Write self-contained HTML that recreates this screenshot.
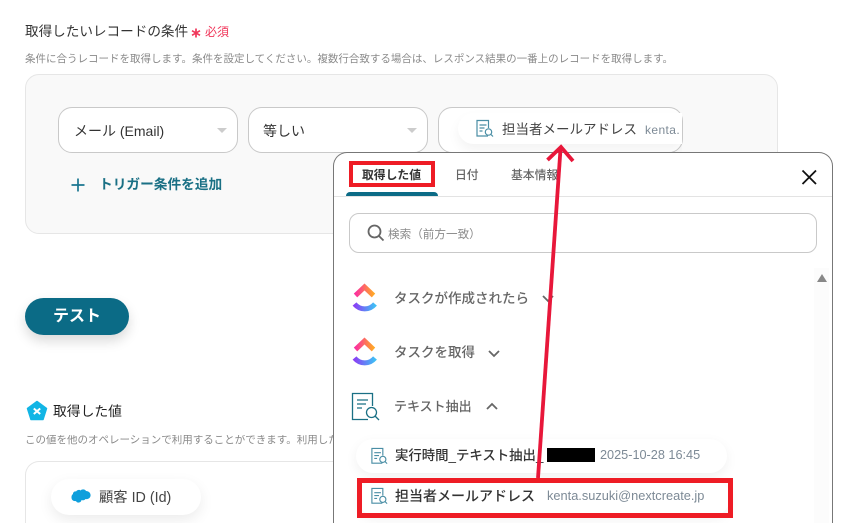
<!DOCTYPE html>
<html lang="ja"><head><meta charset="utf-8"><style>
html,body{margin:0;padding:0;background:#fff;overflow:hidden}
#r{position:relative;width:856px;height:523px;overflow:hidden;background:#fff;font-family:"Liberation Sans","Noto Sans CJK JP",sans-serif;color:#333}
#r div,#r svg{position:absolute}
.t{white-space:nowrap;line-height:1}
.box{box-sizing:border-box;background:#fff;border:1px solid #c9c9c9;border-radius:14px}
.arr{width:0;height:0;border-left:5px solid transparent;border-right:5px solid transparent;border-top:5px solid #ccc}
.pill{background:#fff;border-radius:20px}
</style></head><body><div id="r">
<div class="t" style="left:25px;top:25px;font-size:13.6px;color:#333">取得したいレコードの条件</div>
<svg style="left:191px;top:28px" width="10" height="10" viewBox="0 0 10 10" stroke="#f0365a" stroke-width="1.700"><path d="M5 .5V9.500M1 2.700L9 7.300M9 2.700L1 7.300"/></svg>
<div class="t" style="left:205px;top:26px;font-size:12px;color:#f0365a">必須</div>
<div class="t" style="left:25px;top:54px;font-size:10.500px;line-height:11px;color:#8a8a8a">条件に合うレコードを取得します。条件を設定してください。複数行合致する場合は、レスポンス結果の一番上のレコードを取得します。</div>
<div style="left:25px;top:74px;width:753px;height:160px;box-sizing:border-box;background:#f9f9f9;border:1px solid #e6e6e6;border-radius:14px"></div>
<div class="box" style="left:58px;top:107px;width:180px;height:46px"></div>
<div class="t" style="left:74px;top:124px;font-size:14px">メール (Email)</div>
<div class="arr" style="left:217px;top:128px"></div>
<div class="box" style="left:248px;top:107px;width:180px;height:46px"></div>
<div class="t" style="left:263px;top:124px;font-size:14px">等しい</div>
<div class="arr" style="left:407px;top:128px"></div>
<div class="box" style="left:438px;top:107px;width:245px;height:46px"></div>
<div style="left:458px;top:113px;width:224px;height:31px;background:#fff;border-radius:16px 0 0 16px;box-shadow:0 6px 12px rgba(0,0,0,.05);clip-path:inset(-20px 0 -9px -20px)"></div>
<svg style="left:475px;top:119px" width="20" height="20" viewBox="0 0 20 20" fill="none" stroke="#4a8ea5" stroke-width="1.200"><path d="M13 17H2V1.500h11.500V9M4.500 6h7M4.500 9h5M4.500 12h3"/><circle cx="13.500" cy="13" r="3.200"/><path d="M16 15.500l2 2"/></svg>
<div class="t" style="left:502px;top:123px;font-size:13.500px;color:#444">担当者メールアドレス</div>
<div class="t" style="left:645px;top:124px;font-size:12px;color:#7d8a96;letter-spacing:.4px">kenta.</div>
<svg style="left:71px;top:178px" width="14" height="14" viewBox="0 0 14 14" stroke="#1a7690" stroke-width="1.700"><path d="M7 .5V13.500M.5 7H13.500"/></svg>
<div class="t" style="left:99px;top:178px;font-size:13.700px;font-weight:bold;color:#1a7085">トリガー条件を追加</div>
<div class="t" style="left:25px;top:298px;width:104px;height:37px;border-radius:19px;background:#0b6b86;color:#fff;font-weight:bold;font-size:16px;line-height:37px;text-align:center;box-shadow:0 6px 12px rgba(0,0,0,.15)">テスト</div>
<svg style="left:26px;top:400px" width="22" height="22" viewBox="0 0 22 22"><path d="M11 1.500L20.500 8.500 17 19.500H5L1.500 8.500z" fill="#12b5e5" stroke="#12b5e5" stroke-width="1.500" stroke-linejoin="round"/><path d="M7.800 8.500l6.400 5.500M14.200 8.500l-6.400 5.500" stroke="#fff" stroke-width="2"/></svg>
<div class="t" style="left:53px;top:405px;font-size:13.800px;color:#222">取得した値</div>
<div class="t" style="left:25px;top:435px;font-size:10.500px;color:#8a8a8a;width:308px;overflow:hidden">この値を他のオペレーションで利用することができます。利用したい値</div>
<div style="left:25px;top:461px;width:310px;height:62px;box-sizing:border-box;background:#fff;border:1px solid #e6e6e6;border-bottom:0;border-right:0;border-radius:14px 0 0 0"></div>
<div class="pill" style="left:51px;top:479px;width:150px;height:36px;box-shadow:0 5px 14px rgba(0,0,0,.08)"></div>
<svg style="left:71px;top:489px" width="20" height="15" viewBox="0 0 20 15"><path d="M5 2.500C6.500.5 8.500.5 9.500 1.500 11-.2 14 0 15 2 18 2 20 4.500 19.500 7 19 9.500 16.500 10.500 14.500 10 13.500 11.500 11.500 11.500 10.500 11 10 14 6 14.500 5 12 2.500 12.500.5 11 .5 8.500 .3 6.500 1.500 5.500 2 5 1.800 3.500 3.500 2 5 2.500z" fill="#0f9fdc"/></svg>
<div class="t" style="left:99px;top:491px;font-size:14.300px;color:#444">顧客 ID (Id)</div>

<div style="left:333px;top:152px;width:500px;height:371px;box-sizing:border-box;background:#fff;border:1px solid #777;border-bottom:0;border-radius:14px 14px 0 0"></div>
<div style="left:334px;top:196px;width:498px;height:1px;background:#e3e3e3"></div>
<div style="left:346px;top:192px;width:92px;height:4px;background:#0b6b86;border-radius:4px 4px 0 0"></div>
<div style="left:349px;top:161px;width:86px;height:26px;box-sizing:border-box;border:4.500px solid #ee1c25"></div>
<div class="t" style="left:362px;top:170px;font-size:11.800px;font-weight:bold;color:#333">取得した値</div>
<div class="t" style="left:455px;top:170px;font-size:11.800px;color:#666;font-weight:500">日付</div>
<div class="t" style="left:511px;top:170px;font-size:11.800px;color:#666;font-weight:500">基本情報</div>
<svg style="left:801px;top:169px" width="16" height="16" viewBox="0 0 16 16" stroke="#111" stroke-width="1.800"><path d="M1.500 1.500L15 15M15 1.500L1.500 15"/></svg>
<div class="box" style="left:349px;top:213px;width:468px;height:40px;border-radius:10px"></div>
<svg style="left:366px;top:223px" width="20" height="20" viewBox="0 0 20 20" fill="none" stroke="#666" stroke-width="1.800"><circle cx="8.500" cy="8.500" r="6"/><path d="M13 13l4.500 4.500"/></svg>
<div class="t" style="left:388px;top:229px;font-size:11.600px;color:#8a8a8a">検索（前方一致）</div>
<div style="left:814px;top:268px;width:15px;height:255px;background:#fcfcfc"></div>
<div style="left:817px;top:274px;width:0;height:0;border-left:5px solid transparent;border-right:5px solid transparent;border-bottom:8px solid #888"></div>

<svg style="left:351px;top:283px" width="28" height="32" viewBox="0 0 28 32"><defs><linearGradient id="a" x1="0" x2="1"><stop offset="0" stop-color="#fb2fa0"/><stop offset="1" stop-color="#ffa826"/></linearGradient><linearGradient id="b" x1="0" x2="1"><stop offset="0" stop-color="#8a3ff5"/><stop offset="1" stop-color="#3fc0f5"/></linearGradient></defs><path d="M4.500 12.500L13.500 4l9 8.500" fill="none" stroke="url(#a)" stroke-width="5"/><path d="M3.500 21c5.500 6.500 15 6.500 20.500 0" fill="none" stroke="url(#b)" stroke-width="5"/></svg>
<div class="t" style="left:394px;top:292px;font-size:13.500px;font-weight:500;color:#666">タスクが作成されたら</div>
<svg style="left:541px;top:294px" width="14" height="10" viewBox="0 0 14 10" fill="none" stroke="#666" stroke-width="1.800"><path d="M2 2l5 5 5-5"/></svg>
<svg style="left:351px;top:337px" width="28" height="32" viewBox="0 0 28 32"><path d="M4.500 12.500L13.500 4l9 8.500" fill="none" stroke="url(#a)" stroke-width="5"/><path d="M3.500 21c5.500 6.500 15 6.500 20.500 0" fill="none" stroke="url(#b)" stroke-width="5"/></svg>
<div class="t" style="left:394px;top:346px;font-size:13.500px;font-weight:500;color:#666">タスクを取得</div>
<svg style="left:487px;top:349px" width="14" height="10" viewBox="0 0 14 10" fill="none" stroke="#666" stroke-width="1.800"><path d="M2 2l5 5 5-5"/></svg>
<svg style="left:351px;top:392px" width="30" height="30" viewBox="0 0 30 30" fill="none" stroke="#1a7085" stroke-width="1.300"><path d="M17 27.500H1.500V1.500H21.500V14M6 8h11M6 12h9M6 16h5"/><circle cx="20.500" cy="20.500" r="5"/><path d="M24 24l4 4"/></svg>
<div class="t" style="left:394px;top:400px;font-size:13px;font-weight:500;color:#666">テキスト抽出</div>
<svg style="left:485px;top:401px" width="14" height="10" viewBox="0 0 14 10" fill="none" stroke="#666" stroke-width="1.800"><path d="M2 8l5-5 5 5"/></svg>

<div class="pill" style="left:356px;top:439px;width:371px;height:34px;box-shadow:0 4px 12px rgba(0,0,0,.06)"></div>
<svg style="left:370px;top:447px" width="19" height="19" viewBox="0 0 20 20" fill="none" stroke="#4a8ea5" stroke-width="1.200"><path d="M13 17H2V1.500h11.500V9M4.500 6h7M4.500 9h5M4.500 12h3"/><circle cx="13.500" cy="13" r="3.200"/><path d="M16 15.500l2 2"/></svg>
<div class="t" style="left:395px;top:449px;font-size:13.400px;font-weight:500;color:#333">実行時間_テキスト抽出_</div>
<div style="left:547px;top:448px;width:48px;height:14px;background:#000"></div>
<div class="t" style="left:600px;top:449px;font-size:12.700px;color:#7d8a96">2025-10-28 16:45</div>
<div class="pill" style="left:358px;top:480px;width:372px;height:36px;box-shadow:0 4px 12px rgba(0,0,0,.05)"></div>
<svg style="left:370px;top:487px" width="19" height="19" viewBox="0 0 20 20" fill="none" stroke="#4a8ea5" stroke-width="1.200"><path d="M13 17H2V1.500h11.500V9M4.500 6h7M4.500 9h5M4.500 12h3"/><circle cx="13.500" cy="13" r="3.200"/><path d="M16 15.500l2 2"/></svg>
<div class="t" style="left:395px;top:489px;font-size:14px;font-weight:500;color:#333">担当者メールアドレス</div>
<div class="t" style="left:547px;top:490px;font-size:12.800px;color:#7d8a96">kenta.suzuki@nextcreate.jp</div>
<div style="left:357px;top:478px;width:376px;height:40px;box-sizing:border-box;border:5px solid #ee1c25"></div>
<svg style="left:0;top:0" width="856" height="523" fill="none" stroke="#e8173a" stroke-width="3.800"><path d="M538 478L560.500 149"/><path d="M547.500 160L561 147L573 161"/></svg>
</div></body></html>
